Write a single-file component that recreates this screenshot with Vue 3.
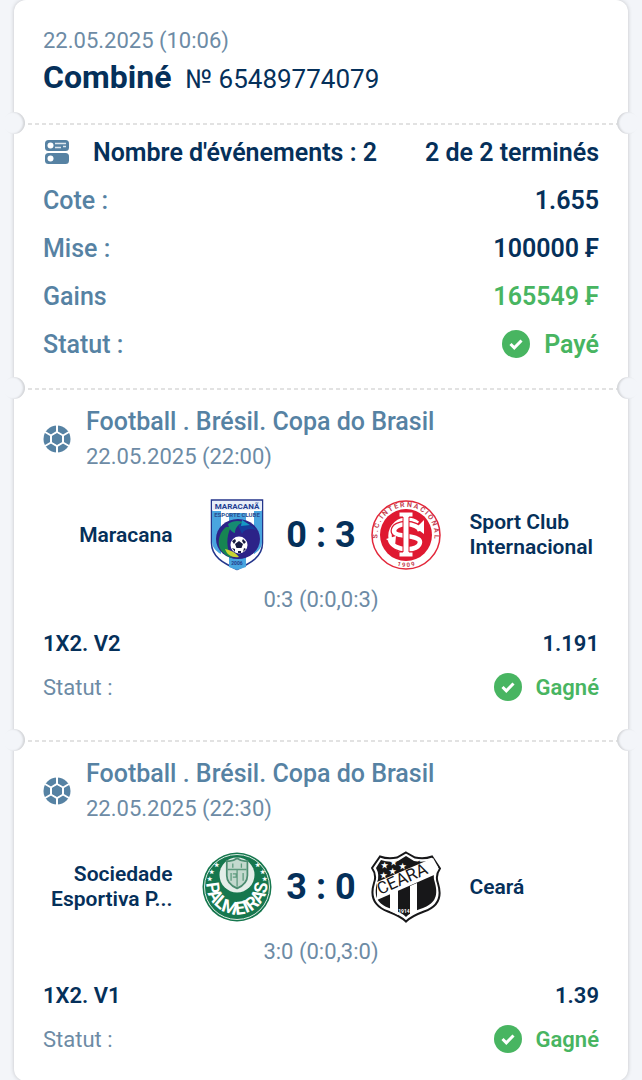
<template>
  <main class="page">
    <article class="ticket">
      <header class="section header">
        <time class="header-date">22.05.2025 (10:06)</time>
        <h1 class="header-title">Combiné <span class="header-number">№ 65489774079</span></h1>
      </header>

      <section class="section summary">
        <div class="row strong">
          <span class="count">
            <svg class="count-icon" viewBox="0 0 24 24" aria-hidden="true">
              <rect width="24" height="11" rx="3.5" fill="#5682a3" />
              <circle cx="5.5" cy="5.5" r="3" fill="#fff" />
              <path d="M10 3.5h11M10 7.5h6M18 6.5h3" stroke="#dde7ee" stroke-width="1.6" />
              <rect y="13" width="24" height="11" rx="3.5" fill="#5682a3" />
              <circle cx="5.5" cy="18.5" r="3" fill="#fff" />
            </svg>
            Nombre d'événements : 2
          </span>
          <span>2 de 2 terminés</span>
        </div>
        <div v-for="item in summary" :key="item.label" class="row">
          <span class="label">{{ item.label }}</span>
          <span class="value" :class="{ success: item.success }">
            <svg v-if="item.icon" class="check" viewBox="0 0 28 28" aria-hidden="true">
              <circle cx="14" cy="14" r="14" fill="#48b561" />
              <path d="M8.5 14l3.8 3.8 7.2-7.3" fill="none" stroke="#fff" stroke-width="3" />
            </svg>
            {{ item.value }}
          </span>
        </div>
      </section>

      <section v-for="event in events" :key="event.id" class="section event">
        <div class="event-head">
          <svg class="ball" viewBox="0 0 28 28" aria-hidden="true">
            <circle cx="14" cy="14" r="13.5" fill="#5682a3" />
            <path
              d="M14 7l6 3.5v7L14 21l-6-3.5v-7zM14 0v7M14 21v7M20 10.5l6-3.5M20 17.5l6 3.5M8 17.5L2 21M8 10.5L2 7"
              fill="none"
              stroke="#fff"
              stroke-width="2"
            />
            <path d="M14 8.5l5 2.8v5.4l-5 2.8-5-2.8v-5.4z" fill="#5682a3" />
          </svg>
          <div>
            <h2 class="league">Football . Brésil. Copa do Brasil</h2>
            <time class="event-date">{{ event.date }}</time>
          </div>
        </div>

        <div class="match">
          <div class="team home">
            <span class="team-name">{{ event.home }}</span>
            <svg v-if="event.id === 1" class="logo" viewBox="0 0 70 72" aria-hidden="true">
              <path d="M9.5 1h51v43c0 14-12 20-25.5 26.5C21.5 64 9.5 58 9.5 44z" fill="#fff" stroke="#24358b" stroke-width="1.5" />
              <path d="M10 12h9v43l-2-1c-5-4-7-7-7-12zM27 14h17v54l-9 3-8-3zM52 12h8v31c0 5-3 9-8 12z" fill="#49a5df" />
              <path d="M10 2h50v9H10z" fill="#e8eef8" />
              <text x="35" y="10" class="crest-text" font-size="8" fill="#243f93" text-anchor="middle">MARACANÃ</text>
              <text x="35" y="18" class="crest-text" font-size="6" fill="#294d8f" text-anchor="middle">ESPORTE CLUBE</text>
              <ellipse cx="36" cy="40" rx="22" ry="20" fill="#2c2388" />
              <path d="M24 28c-6 5-8 12-7 19 2 6 7 10 13 12-6-9-6-22-1-31z" fill="#168552" />
              <path d="M26 25c4-3 10-4 15-2-6 3-8 7-8 11-4-1-6-5-7-9z" fill="#168b72" />
              <path d="M36 26c7-2 14-1 18 5-6-2-12-1-14 4z" fill="#163e9c" />
              <path d="M23 50c5 1 10 3 14 8-7 1-12-2-14-8z" fill="#c9d433" />
              <path d="M40 21l8 5-9 1z" fill="#1698c4" />
              <circle cx="37" cy="46" r="8.5" fill="#fff" />
              <path d="M37 42l4 3-1.5 4h-5L33 45zM30 42l3-2 1 2-2 3zM41 40l3 3-2 2-2-3zM30 49l3 1v3zM42 49l2 1-3 3zM36 52h3v2h-3z" fill="#161a40" />
              <text x="35" y="66" class="crest-text" font-size="5" fill="#263c8a" text-anchor="middle">2006</text>
            </svg>
            <svg v-else class="logo" viewBox="0 0 70 72" aria-hidden="true">
              <circle cx="35" cy="36" r="34.5" fill="#16774e" />
              <circle cx="35" cy="36" r="32.5" fill="none" stroke="#dcebe3" stroke-width="1" />
              <circle cx="35" cy="24" r="17.5" fill="#e4eee9" />
              <g transform="translate(5 3) scale(0.86)">
                <path d="M23 8c5 1 8 0 12-3 4 3 7 4 12 3v17c0 8-5 12-12 15-7-3-12-7-12-15z" fill="#c3d9ce" stroke="#4b8c70" stroke-width="2" />
                <path d="M24 18h22M35 18v20M28 22v9M42 22v9M30 11v5M40 11v5M30 23h4v4h-4" fill="none" stroke="#5e9a7e" stroke-width="1.5" />
              </g>
              <path id="palmeiras-arc" d="M4.5 33A30.5 30.5 0 1 0 65.5 33" fill="none" />
              <text class="crest-text" font-size="18" fill="#fff" text-anchor="middle">
                <textPath href="#palmeiras-arc" startOffset="50%">PALMEIRAS</textPath>
              </text>
              <g class="crest-text" font-size="6" fill="#fff">
                <text x="5" y="30">★</text>
                <text x="7" y="23">★</text>
                <text x="12" y="16">★</text>
                <text x="60" y="30">★</text>
                <text x="58" y="23">★</text>
                <text x="53" y="16">★</text>
              </g>
            </svg>
          </div>

          <strong class="score">{{ event.score }}</strong>

          <div class="team away">
            <svg v-if="event.id === 1" class="logo" viewBox="0 0 70 72" aria-hidden="true">
              <circle cx="35" cy="36" r="34" fill="#fff" stroke="#e3283b" stroke-width="1.5" />
              <circle cx="35" cy="36" r="26" fill="#df1931" />
              <path id="inter-top" d="M10.5 51A28.5 28.5 0 1 1 59.5 51" fill="none" />
              <path id="inter-bottom" d="M17 62Q35 74 53 62" fill="none" />
              <text class="crest-text" font-size="7" fill="#c44150" text-anchor="middle">
                <textPath href="#inter-top" startOffset="50%">S . C . I N T E R N A C I O N A L</textPath>
              </text>
              <text class="crest-text" font-size="6" fill="#c44150" text-anchor="middle">
                <textPath href="#inter-bottom" startOffset="50%">1 9 0 9</textPath>
              </text>
              <path d="M47 24c-6-5-16-5-22 0-8 7-8 19 0 25 6 5 16 4 22-1" fill="none" stroke="#fff" stroke-width="3.5" />
              <path d="M49 32c-2-9-26-9-26 0 0 7 26 3 26 11 0 10-27 10-30-2" fill="none" stroke="#df1931" stroke-width="7" />
              <path d="M49 32c-2-9-26-9-26 0 0 7 26 3 26 11 0 10-27 10-30-2" fill="none" stroke="#fff" stroke-width="4.5" />
              <path d="M53 21v14l-8-6zM15 40l10-3-1 10z" fill="#fff" />
              <path d="M28 13h14v5h-4v35h4v5H28v-5h4V18h-4z" fill="#fff" stroke="#df1931" />
            </svg>
            <svg v-else class="logo" viewBox="0 0 70 72" aria-hidden="true">
              <path d="M35 1.5l9 5q9 2 17-1l8 12q-5 7-2 15c5 16-2 24-14 28-8 3-13 5-18 10-5-5-10-7-18-10C5 56-2 48 3 32q3-8-2-15L9 5.5q8 3 17 1z" fill="#fff" stroke="#171719" stroke-width="2" />
              <path d="M35 5l8 5q9 2 17-1l5 8q-4 7-1 15c4 15-2 21-12 25-8 3-13 5-17 9-4-4-9-6-17-9C8 53 2 47 6 32q3-8-1-15l5-8q8 3 17 1z" fill="#171719" />
              <path d="M6 31L62 7l5 9-4 8L6 49z" fill="#fff" />
              <path d="M19 42l8-3v25l-8-4zM39 35l7-3v29l-7 3z" fill="#fff" />
              <text class="ceara" transform="translate(9 44) rotate(-24)">CEARÁ</text>
              <g class="crest-text" font-size="8" fill="#fff">
                <text x="10" y="17">★</text>
                <text x="19" y="14">★</text>
                <text x="9" y="27">★</text>
                <text x="18" y="23">★</text>
                <text x="28" y="18">★</text>
              </g>
              <text x="33" y="62" class="crest-text" font-size="5" fill="#fff" text-anchor="middle">1914</text>
            </svg>
            <span class="team-name">{{ event.away }}</span>
          </div>
        </div>

        <p class="periods">{{ event.periods }}</p>
        <div class="bet">
          <strong>{{ event.bet }}</strong>
          <strong>{{ event.odds }}</strong>
        </div>
        <div class="bet">
          <span class="label">Statut :</span>
          <span class="value success">
            <svg class="check" viewBox="0 0 28 28" aria-hidden="true">
              <circle cx="14" cy="14" r="14" fill="#48b561" />
              <path d="M8.5 14l3.8 3.8 7.2-7.3" fill="none" stroke="#fff" stroke-width="3" />
            </svg>
            Gagné
          </span>
        </div>
      </section>
    </article>
  </main>
</template>

<script setup>
const summary = [
  { label: 'Cote :', value: '1.655' },
  { label: 'Mise :', value: '100000 ₣' },
  { label: 'Gains', value: '165549 ₣', success: true },
  { label: 'Statut :', value: 'Payé', success: true, icon: true }
]

const events = [
  {
    id: 1,
    date: '22.05.2025 (22:00)',
    home: 'Maracana',
    away: 'Sport Club Internacional',
    score: '0 : 3',
    periods: '0:3 (0:0,0:3)',
    bet: '1X2. V2',
    odds: '1.191'
  },
  {
    id: 2,
    date: '22.05.2025 (22:30)',
    home: 'Sociedade Esportiva P...',
    away: 'Ceará',
    score: '3 : 0',
    periods: '3:0 (0:0,3:0)',
    bet: '1X2. V1',
    odds: '1.39'
  }
]
</script>

<style>
body {
  background: #f3f5f9;
}
</style>

<style scoped>
.page {
  padding: 0 14px;
  overflow: hidden;
  font-family: Roboto, 'Liberation Sans', sans-serif;
  color: #05305a;
}

.ticket {
  background: #fff;
  border-radius: 12px;
  box-shadow: 0 0 4px rgba(0, 0, 0, 0.2);
}

.section {
  position: relative;
  padding: 0 29px;
}

/* perforation */
.section + .section {
  background: repeating-linear-gradient(90deg, #e2e2e2 0 4px, transparent 4px 7px) 0 0 / 100% 2px no-repeat;
}

.section + .section::before,
.section + .section::after {
  content: '';
  position: absolute;
  top: -11px;
  width: 22px;
  height: 22px;
  border-radius: 50%;
  background: #f3f5f9;
}

.section + .section::before {
  left: -11px;
  box-shadow: inset -2px 0 2px rgba(0, 0, 0, 0.13);
}

.section + .section::after {
  right: -11px;
  box-shadow: inset 2px 0 2px rgba(0, 0, 0, 0.13);
}

.header {
  padding-top: 27px;
  padding-bottom: 21px;
}

.header-date {
  display: block;
  font-size: 22px;
  line-height: 28px;
  color: #6d8ba5;
}

.header-title {
  margin: 0;
  font-size: 32px;
  font-weight: 700;
  line-height: 45px;
}

.header-number {
  margin-left: 6px;
  font-size: 26px;
  font-weight: 400;
}

.summary {
  padding-top: 5px;
  padding-bottom: 20px;
}

.row,
.bet {
  display: flex;
  align-items: center;
  justify-content: space-between;
}

.row {
  height: 48px;
  font-size: 25px;
}

.row .label {
  color: #5682a3;
  font-weight: 500;
}

.strong,
.value,
.bet strong {
  font-weight: 600;
}

.count,
.value {
  display: flex;
  align-items: center;
}

.count-icon {
  width: 24px;
  height: 24px;
  margin: 0 24px 0 2px;
}

.success {
  color: #48b561;
}

.check {
  width: 28px;
  height: 28px;
  margin-right: 14px;
}

.event {
  padding-top: 16px;
  padding-bottom: 31px;
}

.event:last-child {
  padding-bottom: 20px;
}

.event-head {
  display: flex;
  align-items: center;
  gap: 15px;
}

.ball {
  width: 28px;
  height: 28px;
}

.league {
  margin: 0;
  font-size: 25px;
  font-weight: 500;
  line-height: 35px;
  color: #5682a3;
}

.event-date {
  display: block;
  font-size: 22px;
  line-height: 35px;
  color: #6d8ba5;
}

.match {
  display: flex;
  align-items: center;
  margin-top: 25px;
}

.team {
  display: flex;
  flex: 1;
  align-items: center;
  gap: 29px;
  min-width: 0;
  font-size: 21px;
  font-weight: 600;
  line-height: 25px;
}

.team-name {
  flex: 1;
}

.home {
  text-align: right;
}

.logo {
  flex: none;
  width: 70px;
  height: 72px;
}

.score {
  flex: none;
  width: 99px;
  font-size: 36px;
  text-align: center;
}

.periods {
  margin: 15px 0 7px;
  font-size: 22px;
  line-height: 28px;
  text-align: center;
  color: #6d8ba5;
}

.bet {
  height: 44px;
  font-size: 22px;
}

.bet .label {
  color: #6d8ba5;
}

.crest-text {
  font-weight: 700;
}

.ceara {
  font-size: 17px;
  font-weight: 400;
  fill: #171719;
}
</style>
